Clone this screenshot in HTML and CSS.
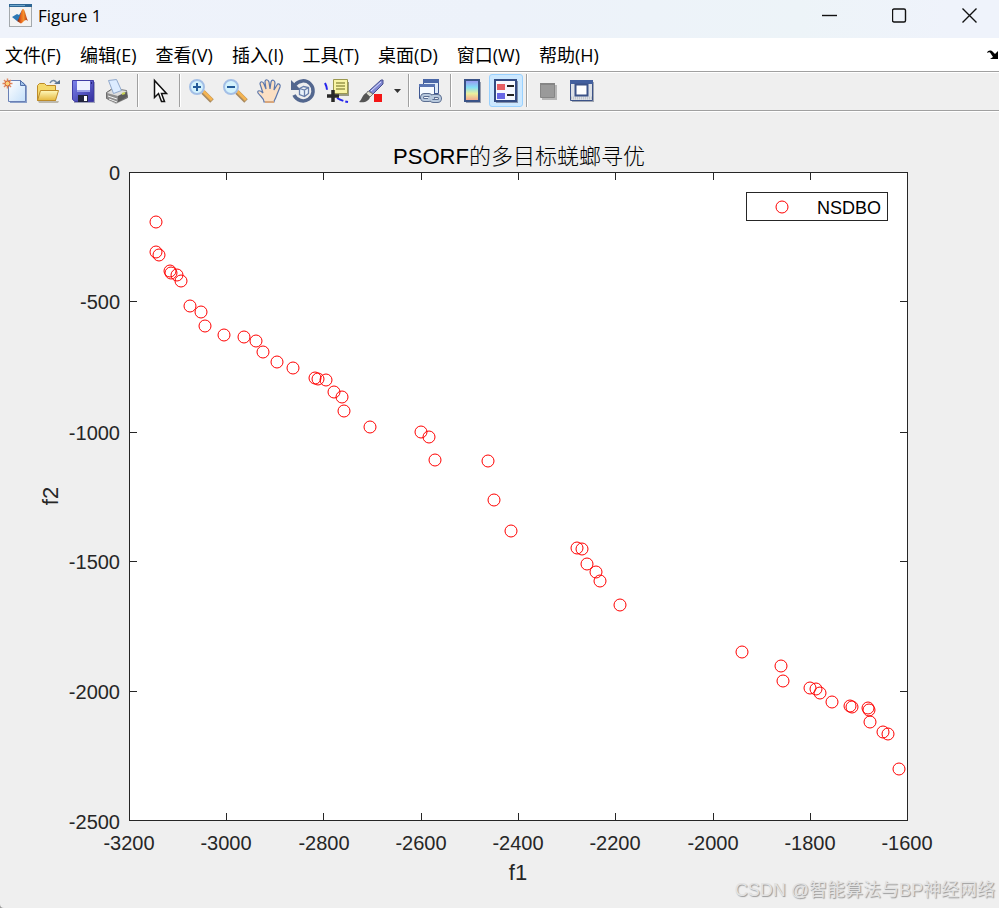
FILE: index.html
```html
<!DOCTYPE html>
<html lang="zh-CN">
<head>
<meta charset="utf-8">
<meta name="viewport" content="width=device-width, initial-scale=1">
<title>Figure 1</title>
<link rel="stylesheet" href="styles.css">
</head>
<body>
<div class="window">
  <header class="titlebar">
    <svg class="app-icon" viewBox="0 0 24 24" aria-hidden="true">
      <defs><linearGradient id="flame" x1="0" x2="1"><stop offset="0" stop-color="#5a1410"/><stop offset=".35" stop-color="#e8631c"/><stop offset=".6" stop-color="#f4902c"/><stop offset="1" stop-color="#a82a14"/></linearGradient></defs>
      <rect x=".5" y=".5" width="22" height="22" fill="#f3f3f3" stroke="#a4a9ad"/>
      <path d="M0 0h23v3H0z" fill="#2e6694"/><path d="M1 1h15v1H1z" fill="#6ea6cb"/>
      <path d="M3 13l5-3 2 1 4-6-3 10-3 2z" fill="#2a77b5"/>
      <path d="M8 17c3-2 4-12 6-12 2 0 3 8 5 12-2-2-3-1-5 1-1 1-2 2-3 1z" fill="url(#flame)"/>
    </svg>
    <h1 class="window-title">Figure 1</h1>
    <div class="window-controls">
      <button type="button" aria-label="最小化"><svg viewBox="0 0 16 16"><path d="M0 7.500h15"/></svg></button>
      <button type="button" aria-label="最大化"><svg viewBox="0 0 16 16"><rect x=".5" y="1" width="13" height="13" rx="1.500"/></svg></button>
      <button type="button" aria-label="关闭"><svg viewBox="0 0 16 16"><path d="M.5 .5l14 14M14.500 .5L.5 14.500"/></svg></button>
    </div>
  </header>

  <nav class="menubar">
    <button type="button">文件(F)</button>
    <button type="button">编辑(E)</button>
    <button type="button">查看(V)</button>
    <button type="button">插入(I)</button>
    <button type="button">工具(T)</button>
    <button type="button">桌面(D)</button>
    <button type="button">窗口(W)</button>
    <button type="button">帮助(H)</button>
    <button type="button" class="dock" aria-label="停靠"><svg viewBox="0 0 12 10"><path d="M0 3c1-3 4-3 6-1l2 2 3-3v8H3l3-2-2-3C3 2 2 2 0 3z"/></svg></button>
  </nav>

  <div class="toolbar" role="toolbar">
    <button type="button" class="tool" aria-label="新建图窗">
      <svg viewBox="0 0 24 24"><defs><linearGradient id="page" x2="1" y2="1"><stop stop-color="#fff"/><stop offset="1" stop-color="#c5e0fa"/></linearGradient></defs>
        <path d="M7 3h13l4 4v17H7z" fill="#8ba0c9"/><path d="M5.500 1.500h12l5 5v16h-17z" fill="url(#page)" stroke="#6a80b5"/><path d="M17.500 1.500v5h5z" fill="#9fc2e8" stroke="#536fa9"/>
        <path d="M4.500-.5v10M-.5 4.500h10M1 1l7 7M8 1L1 8" stroke="#e08a63" stroke-width="1.500"/><circle cx="4.500" cy="4.500" r="2.500" fill="#fbd07c" stroke="#d8612e"/></svg>
    </button>
    <button type="button" class="tool" aria-label="打开文件">
      <svg viewBox="0 0 24 24"><defs><linearGradient id="folder" y2="1" x2="0"><stop stop-color="#fff8bb"/><stop offset="1" stop-color="#e5b83e"/></linearGradient></defs>
        <path d="M1 22h21l-1 2H2z" fill="#bdb9ad"/><path d="M.5 21.500v-15l2-2h5l2 2h9v15z" fill="#f5d96c" stroke="#bd8b28"/><path d="M.5 21.500l3-10h18l-3 10z" fill="url(#folder)" stroke="#bd8b28"/>
        <path d="M13 4c2-4 6-3 7 1" fill="none" stroke="#7188a1" stroke-width="1.500"/><path d="M17 5h6V1z" fill="#597391"/></svg>
    </button>
    <button type="button" class="tool" aria-label="保存图窗">
      <svg viewBox="0 0 24 24"><defs><linearGradient id="disk" y2="1"><stop stop-color="#7d84ec"/><stop offset="1" stop-color="#332f9e"/></linearGradient></defs>
        <path d="M3 3h21v21H3z" fill="#a0a3ba"/><path d="M1.500 1.500h21v21H4l-2.500-2z" fill="url(#disk)" stroke="#403ca5"/><path d="M6 2h13v10H6z" fill="#eef1ff"/><path d="M6 11h13v2H6z" fill="#9aa0e6"/><path d="M7 16h10v7H7z" fill="#22253f"/><path d="M13 17h3v5h-3z" fill="#fff"/><path d="M20 3h1v2h-1z" fill="#28257c"/></svg>
    </button>
    <button type="button" class="tool" aria-label="打印图窗">
      <svg viewBox="0 0 24 24"><path d="M3 21l8 4 12-6v-3z" fill="#b5b5b5"/><path d="M1.500 13.500l6-4 14 2 1 7-11 5-10-4z" fill="#8e8e8e" stroke="#6d6d6d"/><path d="M2 14l6-4 14 2-9 5z" fill="#dedede"/><path d="M3.500 1.500l8-1 5 11-8 3z" fill="#dcecff" stroke="#91a9cc"/><path d="M13 17l9-4v5l-9 5z" fill="#5c5c5c"/><path d="M3 17l9 3M4 20l8 3" stroke="#f1f1f1"/><path d="M17 15l3-1" stroke="#c8d453" stroke-width="2"/></svg>
    </button>
    <span class="separator"></span>
    <button type="button" class="tool" aria-label="编辑绘图">
      <svg viewBox="0 0 24 24"><path d="M7.500 1.500v17l4-4 3 8h3l-3-8h5z" fill="#fff" stroke="#111" stroke-width="1.500"/></svg>
    </button>
    <span class="separator"></span>
    <button type="button" class="tool" aria-label="放大">
      <svg viewBox="0 0 24 24"><path d="M14 13l9 9" stroke="#a98a60" stroke-width="5"/><path d="M14 12l9 9" stroke="#f4b452" stroke-width="3"/><circle cx="8" cy="8" r="7" fill="#d4f2fc" stroke="#a3bfe6" stroke-width="2"/><path d="M8 4v8M4 8h8" stroke="#245b99" stroke-width="2"/></svg>
    </button>
    <button type="button" class="tool" aria-label="缩小">
      <svg viewBox="0 0 24 24"><path d="M14 13l9 9" stroke="#a98a60" stroke-width="5"/><path d="M14 12l9 9" stroke="#f4b452" stroke-width="3"/><circle cx="8" cy="8" r="7" fill="#d4f2fc" stroke="#a3bfe6" stroke-width="2"/><path d="M4 8h8" stroke="#245b99" stroke-width="2"/></svg>
    </button>
    <button type="button" class="tool" aria-label="平移">
      <svg viewBox="0 0 24 24"><path d="M7 23c0-4-3-5-6-9-1-3 2-3 5 0L3 5c0-3 3-3 4 0l2 5-1-7c0-3 3-3 4 0l1 7 1-7c1-3 4-2 4 1l-1 7 3-5c1-2 4-1 3 2l-4 10c-1 3-2 3-2 5z" fill="#fbdfc3" stroke="#5b76ab" stroke-width="1.200"/><path d="M8 23h9" stroke="#d8a77d" stroke-width="2"/></svg>
    </button>
    <button type="button" class="tool" aria-label="三维旋转">
      <svg viewBox="0 0 24 24"><path d="M4 6a10 10 0 1 1-1 10" fill="none" stroke="#53678f" stroke-width="3.500"/><path d="M0 1v10h10z" fill="#53678f"/><path d="M8.500 9.500l4-2 5 1v6l-4 3-5-2zM8.500 9.500l5 1.500 4-2.500M13.500 11v6" fill="#e9f2fb" stroke="#687eaa" stroke-width="1.300"/></svg>
    </button>
    <button type="button" class="tool" aria-label="数据游标">
      <svg viewBox="0 0 24 24"><path d="M0 4q2 4 2 7M12 19q5 3 11 4" fill="none" stroke="#2524ec" stroke-width="2" stroke-dasharray="7 2"/><path d="M10 3h14v14H10z" fill="#999b83"/><path d="M8.500.5h14v14h-14z" fill="#f8f4a5" stroke="#9b9850"/><path d="M11 4h9M11 7h9M11 10h9" stroke="#98964a" stroke-width="1.500"/><path d="M8 11v12M2 17h12" stroke="#282828" stroke-width="3.500"/></svg>
    </button>
    <button type="button" class="tool" aria-label="刷亮数据">
      <svg viewBox="0 0 24 24"><path d="M10 12L22 1h2v4L14 15z" fill="#8188d2" stroke="#48518f"/><path d="M12 12L22 3" stroke="#dadeff"/><path d="M9 12l5 3-3 3-4-3z" fill="#deded2" stroke="#777"/><path d="M7 14l4 4c-1 4-5 6-11 5 3-2 3-7 7-9z" fill="#555"/><path d="M15 15h8v8h-8z" fill="#f41616"/></svg>
    </button>
    <button type="button" class="tool-menu" aria-label="刷亮选项"><svg viewBox="0 0 8 6"><path d="M1 1h7L4.500 5z" fill="#333"/></svg></button>
    <span class="separator"></span>
    <button type="button" class="tool" aria-label="链接绘图">
      <svg viewBox="0 0 24 24"><path d="M5.500 .5h15v14h-15z" fill="#dfebf8" stroke="#3e5791"/><path d="M5 0h16v4H5z" fill="#4a67a7"/><path d="M1.500 5.500h15v14h-15z" fill="#f7fbff" stroke="#3e5791"/><path d="M1 5h16v3H1z" fill="#5975b3"/><g fill="none" stroke="#5b6e91" stroke-width="4"><rect x="4" y="16" width="9" height="5" rx="2.500"/><rect x="13" y="17" width="9" height="5" rx="2.500"/></g><g fill="none" stroke="#b8c9dd" stroke-width="2"><rect x="4" y="16" width="9" height="5" rx="2.500"/><rect x="13" y="17" width="9" height="5" rx="2.500"/><path d="M10 19h6"/></g></svg>
    </button>
    <span class="separator"></span>
    <button type="button" class="tool" aria-label="插入颜色栏">
      <svg viewBox="0 0 24 24"><defs><linearGradient id="spectrum" x2="0" y2="1"><stop stop-color="#9b90f0"/><stop offset=".35" stop-color="#83dff5"/><stop offset=".65" stop-color="#edef9d"/><stop offset="1" stop-color="#f49d8d"/></linearGradient></defs><path d="M6 3h15v21H6z" fill="#999fae"/><path d="M5 1h14v21H5z" fill="url(#spectrum)" stroke="#3a5387" stroke-width="2"/></svg>
    </button>
    <button type="button" class="tool active" aria-label="插入图例" aria-pressed="true">
      <svg viewBox="0 0 24 24"><path d="M2 2h22v22H2z" fill="#8290ab"/><path d="M1 1h21v21H1z" fill="#f5f8ff" stroke="#334b83" stroke-width="2"/><path d="M3 5h8v6H3z" fill="#e66065"/><path d="M3 14h8v6H3z" fill="#6767e5"/><path d="M13 7h7M13 16h7" stroke="#222" stroke-width="2"/></svg>
    </button>
    <span class="separator"></span>
    <button type="button" class="tool" aria-label="隐藏绘图工具">
      <svg viewBox="0 0 24 24"><path d="M6 6h15v15H6z" fill="#b7b7b7"/><path d="M4.500 4.500h14v14h-14z" fill="#9a9a9a" stroke="#868686"/><path d="M4 5h15" stroke="#858585" stroke-width="2"/></svg>
    </button>
    <button type="button" class="tool" aria-label="显示绘图工具">
      <svg viewBox="0 0 24 24"><path d="M2 3h22v20H2z" fill="#a0a6b1"/><path d="M.5 1.500h22v20H.5z" fill="#dce0e6" stroke="#3c5388"/><path d="M0 1h23v4H0z" fill="#425f9e"/><path d="M1 19h21" stroke="#c4c7cb" stroke-width="3" stroke-dasharray="1 1"/><path d="M5.500 5.500h12v11h-12z" fill="#fff" stroke="#3c5388" stroke-width="2"/></svg>
    </button>
  </div>

  <main class="figure">
    <svg class="chart" viewBox="0 0 999 797" role="img" aria-label="PSORF的多目标蜣螂寻优">
      <g transform="translate(0 -111)">
        <rect class="axes" x="129.500" y="172.500" width="778" height="648"/>
        <path class="axis" d="M226.500 173v7M323.500 173v7M421.500 173v7M518.500 173v7M615.500 173v7M713.500 173v7M810.500 173v7M226.500 820v-7M323.500 820v-7M421.500 820v-7M518.500 820v-7M615.500 820v-7M713.500 820v-7M810.500 820v-7M130 301.500h7M130 432.500h7M130 561.500h7M130 691.500h7M907 301.500h-7M907 432.500h-7M907 561.500h-7M907 691.500h-7"/>
        <text class="title" x="519" y="164">PSORF的多目标蜣螂寻优</text>
        <g class="tick y-tick">
          <text x="120" y="180">0</text><text x="120" y="309">-500</text><text x="120" y="440">-1000</text><text x="120" y="569">-1500</text><text x="120" y="699">-2000</text><text x="120" y="829">-2500</text>
        </g>
        <g class="tick x-tick">
          <text x="129" y="850">-3200</text><text x="226" y="850">-3000</text><text x="324" y="850">-2800</text><text x="421" y="850">-2600</text><text x="518" y="850">-2400</text><text x="615" y="850">-2200</text><text x="713" y="850">-2000</text><text x="810" y="850">-1800</text><text x="907" y="850">-1600</text>
        </g>
        <text class="label" x="518" y="880">f1</text>
        <text class="label" transform="translate(58 496) rotate(-90)">f2</text>
        <g class="points">
          <circle cx="156" cy="222" r="6"/><circle cx="156" cy="252" r="6"/><circle cx="159" cy="255" r="6"/><circle cx="170" cy="271" r="6"/><circle cx="171" cy="273" r="6"/><circle cx="177" cy="275" r="6"/><circle cx="181" cy="281" r="6"/><circle cx="190" cy="306" r="6"/><circle cx="201" cy="312" r="6"/><circle cx="205" cy="326" r="6"/><circle cx="224" cy="335" r="6"/><circle cx="244" cy="337" r="6"/><circle cx="256" cy="341" r="6"/><circle cx="263" cy="352" r="6"/><circle cx="277" cy="362" r="6"/><circle cx="293" cy="368" r="6"/><circle cx="315" cy="378" r="6"/><circle cx="318" cy="379" r="6"/><circle cx="326" cy="380" r="6"/><circle cx="334" cy="392" r="6"/><circle cx="342" cy="397" r="6"/><circle cx="344" cy="411" r="6"/><circle cx="370" cy="427" r="6"/><circle cx="421" cy="432" r="6"/><circle cx="429" cy="437" r="6"/><circle cx="435" cy="460" r="6"/><circle cx="488" cy="461" r="6"/><circle cx="494" cy="500" r="6"/><circle cx="511" cy="531" r="6"/><circle cx="577" cy="548" r="6"/><circle cx="582" cy="549" r="6"/><circle cx="587" cy="564" r="6"/><circle cx="596" cy="572" r="6"/><circle cx="600" cy="581" r="6"/><circle cx="620" cy="605" r="6"/><circle cx="742" cy="652" r="6"/><circle cx="781" cy="666" r="6"/><circle cx="783" cy="681" r="6"/><circle cx="810" cy="688" r="6"/><circle cx="816" cy="689" r="6"/><circle cx="820" cy="693" r="6"/><circle cx="832" cy="702" r="6"/><circle cx="850" cy="706" r="6"/><circle cx="852" cy="707" r="6"/><circle cx="868" cy="708" r="6"/><circle cx="869" cy="710" r="6"/><circle cx="870" cy="722" r="6"/><circle cx="883" cy="732" r="6"/><circle cx="888" cy="734" r="6"/><circle cx="899" cy="769" r="6"/>
        </g>
        <rect class="axes" x="746.500" y="192.500" width="141" height="28"/>
        <g class="points"><circle cx="782" cy="207" r="6"/></g>
        <text class="legend" x="817" y="214">NSDBO</text>
      </g>
    </svg>
    <p class="watermark">CSDN @智能算法与BP神经网络</p>
  </main>
</div>
</body>
</html>
```
FILE: styles.css
```css
* { box-sizing: border-box; }

body {
  margin: 0;
  background: #999;
  color: #000;
  font-family: "Open Sans", "Noto Sans CJK SC", sans-serif;
}

button {
  padding: 0;
  border: 0;
  background: none;
  color: inherit;
  font: inherit;
}

svg { display: block; }

.window {
  display: flex;
  flex-direction: column;
  min-height: 100vh;
  overflow: hidden;
  border-bottom-left-radius: 4px;
  background: #efefef;
}

.titlebar {
  display: flex;
  align-items: center;
  height: 38px;
  padding: 0 21px 6px 9px;
  background: linear-gradient(90deg, #eff3fb 0%, #edf2fa 50%, #edf4f8 80%, #eff3fb 95%);
}

.app-icon { width: 24px; height: 24px; }

.window-title {
  margin: 0 0 0 5px;
  font-size: 17px;
  font-weight: 400;
  line-height: 24px;
}

.window-controls {
  display: flex;
  gap: 54px;
  margin-left: auto;
}

.window-controls svg {
  width: 16px;
  height: 16px;
  fill: none;
  stroke: #111;
  stroke-width: 1.4;
}

.menubar {
  display: flex;
  align-items: center;
  gap: 19px;
  height: 34px;
  padding-left: 5px;
  border-bottom: 1px solid #a0a0a0;
  background: #fff;
  font-size: 18px;
  line-height: 24px;
  white-space: nowrap;
}

.dock { margin-left: auto; }
.dock svg { width: 12px; height: 10px; }

.toolbar {
  display: flex;
  align-items: flex-start;
  height: 39px;
  margin-left: -2px;
  padding-top: 1px;
  border-top: 1px solid #fff;
  border-bottom: 1px solid #a0a0a0;
  background: #efefef;
}

.tool {
  display: grid;
  flex: none;
  place-items: center;
  width: 34px;
  height: 33px;
  border: 1px solid transparent;
  border-radius: 3px;
}

.tool svg { width: 24px; height: 24px; overflow: visible; fill: none; }

.tool.active { border-color: #99d1ff; background: #cce8ff; }

.tool-menu {
  display: grid;
  place-items: center;
  width: 17px;
  height: 33px;
}

.tool-menu svg { width: 8px; height: 6px; }

.separator {
  flex: none;
  width: 2px;
  height: 33px;
  margin: 0 3px;
  border-left: 1px solid #a0a0a0;
  border-right: 1px solid #fff;
}

.figure {
  position: relative;
  display: flex;
  flex: 1;
  box-shadow: inset 0 1px #fff;
}

.chart {
  flex: 1;
  min-width: 0;
  width: 100%;
  font-family: "Liberation Sans", "Noto Sans CJK SC", sans-serif;
}

.axes { fill: #fff; stroke: #262626; }
.axis { fill: none; stroke: #262626; }
.points { fill: none; stroke: #f00; }
.title { font-size: 22px; font-weight: 300; text-anchor: middle; }
.label { font-size: 22px; fill: #262626; text-anchor: middle; }
.legend { font-size: 18px; }
.tick { font-size: 20px; fill: #262626; }
.y-tick { text-anchor: end; }
.x-tick { text-anchor: middle; }

.watermark {
  position: absolute;
  right: 4px;
  bottom: 5px;
  margin: 0;
  color: #e2e2e2;
  font-family: "Liberation Sans", "Noto Sans CJK SC", sans-serif;
  font-size: 18px;
  line-height: 26px;
  text-shadow: 1px 1px 1px #999;
  white-space: nowrap;
}
```
